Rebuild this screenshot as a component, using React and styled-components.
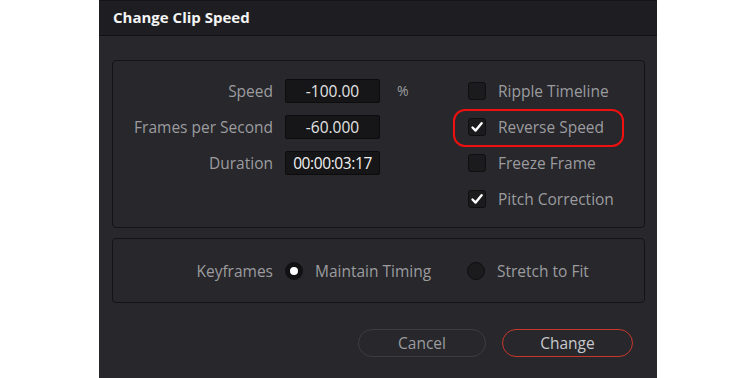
import styled, { createGlobalStyle } from "styled-components";

const GlobalStyle = createGlobalStyle`
* { box-sizing: border-box; }
body {
  margin: 0;
  background: #ffffff;
  font-family: 'Open Sans', 'Noto Sans', sans-serif;
}
`

const speedRows = [
    { label: "Speed", value: "-100.00", unit: "%" },
    { label: "Frames per Second", value: "-60.000", unit: "" },
    { label: "Duration", value: "00:00:03:17", unit: "", bright: true },
]

const options = [
    { label: "Ripple Timeline", checked: false },
    { label: "Reverse Speed", checked: true, marked: true },
    { label: "Freeze Frame", checked: false },
    { label: "Pitch Correction", checked: true },
]

function Check() {
    return (
        <svg width="14" height="14" viewBox="0 0 14 14">
            <path d="M2.5 7.5 L5.6 10.6 L11.6 3.2" fill="none" stroke="#ffffff" strokeWidth="2.4" strokeLinecap="round" strokeLinejoin="round" />
        </svg>
    )
}

export default function App() {
    return (
        <>
            <GlobalStyle />
            <Dialog>
                <Header>Change Clip Speed</Header>
                <Body>
                    <Panel>
                        <Fields>
                            {speedRows.map((row) => (
                                <FieldRow key={row.label}>
                                    <Label>{row.label}</Label>
                                    <Input bright={row.bright}>{row.value}</Input>
                                    <Unit>{row.unit}</Unit>
                                </FieldRow>
                            ))}
                        </Fields>
                        <Options>
                            {options.map((opt) => (
                                <Option key={opt.label}>
                                    {opt.marked && <Highlight />}
                                    <Box>{opt.checked && <Check />}</Box>
                                    <OptionText>{opt.label}</OptionText>
                                </Option>
                            ))}
                        </Options>
                    </Panel>
                    <KeyPanel>
                        <Label>Keyframes</Label>
                        <RadioGroup>
                            <RadioItem>
                                <Radio selected />
                                <OptionText>Maintain Timing</OptionText>
                            </RadioItem>
                        </RadioGroup>
                        <RadioItem>
                            <Radio />
                            <OptionText>Stretch to Fit</OptionText>
                        </RadioItem>
                    </KeyPanel>
                    <Footer>
                        <Button>Cancel</Button>
                        <Button primary>Change</Button>
                    </Footer>
                </Body>
            </Dialog>
        </>
    )
}

const Dialog = styled.div`
margin-left: 99px;
width: 558px;
height: 378px;
background-color: #27272c;
display: flex;
flex-direction: column;
`
const Header = styled.div`
height: 36px;
background-color: #1e1e22;
border-top: 1px solid #141416;
border-bottom: 1px solid #121214;
color: #f4f4f4;
font-weight: 700;
font-size: 15px;
padding: 0 0 2px 14px;
display: flex;
align-items: center;
`
const Body = styled.div`
flex: 1;
padding: 24px 12px 0 13px;
display: flex;
flex-direction: column;
`
const Panel = styled.div`
height: 168px;
border: 1px solid #141416;
border-radius: 4px;
display: flex;
padding-top: 18px;
`
const Fields = styled.div`
display: grid;
grid-template-columns: 160px 95px 40px;
column-gap: 12px;
row-gap: 12px;
align-content: start;
`
const FieldRow = styled.div`
display: contents;
`
const Label = styled.div`
width: 160px;
text-align: right;
color: #9c9c9f;
font-size: 15.5px;
line-height: 24px;
`
const Input = styled.div`
height: 24px;
background-color: #161618;
border: 1px solid #0c0c0d;
border-radius: 2px;
color: ${props => props.bright ? "#f2f2f2" : "#e4e4e4"};
font-size: 15.5px;
line-height: 22px;
text-align: center;
white-space: nowrap;
letter-spacing: ${props => props.bright ? "-0.4px" : "0"};
`
const Unit = styled.div`
color: #9c9c9f;
font-size: 14px;
line-height: 24px;
padding-left: 5px;
`
const Options = styled.div`
margin-left: 36px;
padding-top: 3px;
display: flex;
flex-direction: column;
gap: 18px;
`
const Option = styled.div`
position: relative;
height: 18px;
display: flex;
align-items: center;
gap: 12px;
`
const Highlight = styled.div`
position: absolute;
left: -15px;
top: -9px;
width: 171px;
height: 38px;
border: 2.5px solid #f01010;
border-radius: 12px;
`
const Box = styled.div`
width: 18px;
height: 18px;
background-color: #1b1b1e;
border: 1px solid #0f0f10;
border-radius: 3px;
display: flex;
align-items: center;
justify-content: center;
`
const OptionText = styled.span`
color: #9c9c9f;
font-size: 15.5px;
white-space: nowrap;
`
const KeyPanel = styled.div`
margin-top: 10px;
height: 65px;
border: 1px solid #141416;
border-radius: 4px;
display: flex;
align-items: center;
`
const RadioGroup = styled.div`
margin-left: 12px;
width: 182px;
`
const RadioItem = styled.div`
display: flex;
align-items: center;
gap: 12px;
`
const Radio = styled.div`
width: 18px;
height: 18px;
border-radius: 50%;
background-color: ${props => props.selected ? "#ffffff" : "#1b1b1e"};
border: ${props => props.selected ? "5px solid #111113" : "1px solid #0f0f10"};
`
const Footer = styled.div`
margin-top: 26px;
padding-right: 12px;
display: flex;
justify-content: flex-end;
gap: 16px;
`
const Button = styled.div`
width: ${props => props.primary ? "131px" : "128px"};
height: 28px;
border-radius: 14px;
border: 1px solid ${props => props.primary ? "#c8372c" : "#3c3c41"};
color: ${props => props.primary ? "#c9c9cc" : "#9c9c9f"};
font-size: 15.5px;
display: flex;
align-items: center;
justify-content: center;
`
